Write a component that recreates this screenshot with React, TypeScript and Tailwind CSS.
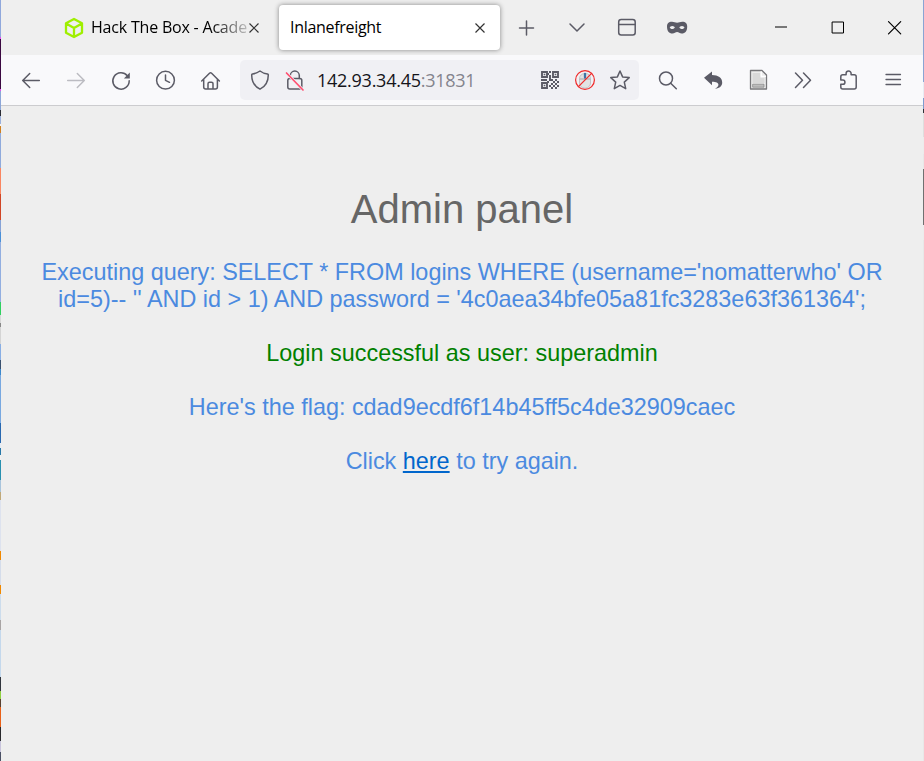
import React from "react";

type IconProps = { children: React.ReactNode; className?: string };

function Icon({ children, className = "" }: IconProps) {
  return (
    <svg
      viewBox="0 0 24 24"
      fill="none"
      stroke="currentColor"
      strokeWidth="1.5"
      strokeLinecap="round"
      strokeLinejoin="round"
      className={`h-6 w-6 shrink-0 ${className}`}
    >
      {children}
    </svg>
  );
}

const leftEdge: [number, string][] = [
  [37, "#90a8dc"], [2, "#e050f0"], [50, "#3a0840"], [2, "#e050f0"], [19, "#8ca6d8"], [6, "#2a2c34"],
  [8, "#9ab0dc"], [2, "#f4f4f4"], [7, "#d08020"], [35, "#8faadc"], [26, "#f98560"], [26, "#d04525"],
  [12, "#86a2d6"], [10, "#4a90d8"], [60, "#92aee0"], [13, "#30d060"], [8, "#d8d8d8"], [4, "#888888"],
  [17, "#d4d4d4"], [16, "#88aee4"], [9, "#39506f"], [6, "#3c88cc"], [48, "#78a8e0"], [20, "#2868b0"],
  [5, "#e4ebf4"], [7, "#2878a8"], [5, "#f0f0f0"], [20, "#2890b0"], [12, "#a8c4dc"], [8, "#c0a878"],
  [51, "#dde2ee"], [9, "#f08800"], [25, "#d4dcea"], [9, "#f08800"], [26, "#ccdcec"], [10, "#a8a4a4"],
  [47, "#c4d8ec"], [14, "#30343c"], [8, "#90d040"], [8, "#584030"], [20, "#e86018"], [14, "#28282c"],
  [11, "#c8c4dc"], [15, "#4a5064"],
];

const rightEdge: [number, string][] = [
  [82, "#8aa4d4"], [16, "#e8ecf4"], [11, "#7e9cd0"], [4, "#303238"], [24, "#dedede"], [17, "#ececec"],
  [15, "#e8e8e8"], [56, "#707070"], [15, "#ececec"], [521, "#e8e8e8"],
];

function Edge({ bands }: { bands: [number, string][] }) {
  return (
    <div className="flex w-px shrink-0 flex-col overflow-hidden">
      {bands.map(([height, background], i) => (
        <div key={i} className="w-px shrink-0" style={{ height, background }} />
      ))}
    </div>
  );
}

function TabClose() {
  return (
    <svg viewBox="0 0 12 12" className="h-3 w-3 shrink-0" fill="none" stroke="#333" strokeWidth="1.2">
      <path d="m1.500 1.500 9 9m0-9-9 9" />
    </svg>
  );
}

function TabStrip() {
  return (
    <div className="flex h-[55px] items-center bg-[#efefef] text-[#5b5b66]">
      <div className="flex h-[45px] w-[278px] shrink-0 items-center pl-[62px]">
        <svg viewBox="0 0 22 22" className="h-[22px] w-[22px] shrink-0" fill="none" stroke="#9fef00" strokeWidth="2.3" strokeLinejoin="round">
          <path d="M11 2 19 6.300v9.400L11 20 3 15.700V6.300zM3.500 6.700 11 11l7.500-4.300M11 11v8.500" />
        </svg>
        <span className="ml-[6px] w-[157px] shrink-0 whitespace-nowrap pb-px text-[16px] leading-6 tracking-[-0.2px] text-black [mask-image:linear-gradient(to_right,black_120px,transparent_165px)]">
          Hack The Box - Acade
        </span>
        <TabClose />
      </div>
      <div className="flex h-[45px] w-[221px] shrink-0 items-center justify-between rounded-[4px] bg-white pr-[14px] pl-[11px] shadow-[0_0_5px_rgba(0,0,0,0.45)]">
        <span className="pb-px text-[16px] leading-6 tracking-[-0.3px] text-black">Inlanefreight</span>
        <TabClose />
      </div>
      <div className="ml-[15px] flex shrink-0 gap-[26px]">
        <Icon><path d="M4.500 12h14M11.500 5v14" /></Icon>
        <Icon><path d="m5 8 7 7 7-7" /></Icon>
        <Icon>
          <rect x="3.700" y="3.500" width="16.500" height="15.500" rx="2.500" />
          <path d="M4 8.500h16" />
        </Icon>
        <Icon>
          <path
            fill="currentColor"
            stroke="none"
            fillRule="evenodd"
            d="M7 5.700C3.500 5.700 2 7.700 2 10.500 2 14.800 4 17.600 7.500 17.600c2 0 3-1.500 4.600-1.500s2.600 1.500 4.600 1.500c3.500 0 5.500-2.800 5.500-7.100C22.200 7.700 20.700 5.700 17.200 5.700c-2 0-3.400 1-5.100 1S9 5.700 7 5.700Zm.2 4.300c1.500 0 2.300.8 2.700 1.600-.5.900-1.400 1.500-2.700 1.500s-2.100-.6-2.500-1.500c.4-.8 1.200-1.600 2.500-1.600Zm9.800 0c1.300 0 2.100.8 2.500 1.600-.4.900-1.200 1.500-2.500 1.500s-2.200-.6-2.700-1.500c.4-.8 1.200-1.600 2.700-1.600Z"
          />
        </Icon>
      </div>
      <div className="ml-auto flex shrink-0 items-center gap-[33px] pr-4 text-black">
        <Icon><path strokeWidth="1" strokeLinecap="butt" d="M6 11h12" /></Icon>
        <Icon><path strokeWidth="1" strokeLinejoin="miter" d="M6.500 6h11v11h-11z" /></Icon>
        <Icon><path strokeWidth="1.200" d="m5.500 5.700 12.200 12.200m0-12.200L5.500 17.900" /></Icon>
      </div>
    </div>
  );
}

const qrDots = [
  [11, 3], [9, 5], [11, 7], [3, 11], [7, 11], [11, 11], [9, 13], [13, 11], [15, 13], [17, 11], [19, 13],
  [13, 15], [11, 17], [15, 17], [17, 15], [19, 17], [13, 19], [17, 19], [11, 9], [5, 11],
];

function AddressBar() {
  return (
    <div className="flex h-10 w-[399px] shrink-0 items-center rounded-[5px] bg-[#f0f0f4] pr-[7px] pl-2">
      <Icon>
        <path d="M12 3c2.500 1.900 5 2.700 7.500 2.900a1 1 0 0 1 .8 1c0 6-2 11-8.300 14.300C5.700 17.900 3.700 12.900 3.700 6.900a1 1 0 0 1 .8-1C7 5.700 9.500 4.900 12 3Z" />
      </Icon>
      <Icon className="ml-[11px]">
        <path d="M7.300 10.500V7.600a4.500 4.500 0 0 1 9 0v2.900" />
        <rect x="4.800" y="10.500" width="14" height="10.500" rx="2" />
        <path d="m3.500 5 16.500 17" stroke="#f0f0f4" strokeWidth="3" />
        <path d="m3.500 5 16.500 17" stroke="#ff4f70" strokeWidth="1.700" />
      </Icon>
      <span className="ml-[10px] whitespace-nowrap text-[18px] leading-6 tracking-[-0.26px] text-[#15141a]">
        142.93.34.45<span className="text-[#84848d]">:31831</span>
      </span>
      <div className="ml-auto flex gap-[11px]">
        <Icon>
          <g strokeWidth="1.900" strokeLinejoin="miter">
            <path d="M4 4h5v5H4zM15 4h5v5h-5zM4 15h5v5H4z" />
          </g>
          <g fill="currentColor" stroke="none">
            <path d="M5.700 5.700h1.600v1.600H5.700zM16.700 5.700h1.600v1.600h-1.600zM5.700 16.700h1.600v1.600H5.700z" />
            {qrDots.map(([x, y]) => (
              <rect key={`${x}-${y}`} x={x} y={y} width="2" height="2" />
            ))}
          </g>
        </Icon>
        <Icon>
          <rect x="6.500" y="5.500" width="11" height="14.500" rx="5" fill="#e2e3e3" stroke="#c3c5c6" strokeWidth="1" />
          <path d="M7 11h10M12 5.500V11" stroke="#9fa5aa" strokeWidth="1" />
          <path d="M12 6v3.500" stroke="#3e72a5" strokeWidth="2.300" />
          <circle cx="12" cy="12" r="9.400" stroke="#ef2929" strokeWidth="1.200" />
          <path d="M18.600 5.400 5.400 18.600" stroke="#ef2929" strokeWidth="1.300" />
        </Icon>
        <Icon>
          <path d="m12 3 2.600 5.900 6.600.7-4.900 4.500 1.400 6.600L12 17.400l-5.700 3.300 1.400-6.600-4.900-4.500 6.600-.7z" />
        </Icon>
      </div>
    </div>
  );
}

function Toolbar() {
  return (
    <div className="flex h-[51px] items-center border-b border-[#cccccf] bg-[#f9f9fb] text-[#5b5b66]">
      <div className="flex w-[239px] shrink-0 gap-[21px] pl-[18px]">
        <Icon><path d="M20.300 12.500H3.700M10.700 5.500l-7 7 7 7" /></Icon>
        <Icon className="text-[#bcbcc2]"><path d="M3.700 12.500h16.600M13.300 5.500l7 7-7 7" /></Icon>
        <Icon>
          <path d="M18.300 7.700a8.200 8.200 0 1 0 1.900 5.100" />
          <path d="M20.800 4.500v5.900h-5.900z" fill="currentColor" stroke="none" />
        </Icon>
        <Icon>
          <circle cx="11.500" cy="12.200" r="8.900" />
          <path d="M11.500 7v5.300l4 2" />
        </Icon>
        <Icon>
          <path d="m2.700 13 7.800-7.800a1.500 1.500 0 0 1 2.100 0l7.800 7.800M4.700 11.500v7.500a2 2 0 0 0 2 2h9.700a2 2 0 0 0 2-2v-7.500M9 20.700v-5a1.500 1.500 0 0 1 1.500-1.500h2a1.500 1.500 0 0 1 1.500 1.500v5" />
        </Icon>
      </div>
      <AddressBar />
      <div className="ml-[17px] flex shrink-0 gap-[21px]">
        <Icon>
          <circle cx="10" cy="10.500" r="6.500" />
          <path d="m14.700 15.200 5.600 5.600" />
        </Icon>
        <Icon>
          <path fill="currentColor" stroke="none" d="M3 9.800 11 3.500v3.600c6.200 0 10.200 2.900 10.200 7.300 0 3.300-2.300 5.800-7.200 6.400 2.400-1.200 3.400-2.500 3.400-4 0-1.800-2-3-6.400-3v3.500z" />
        </Icon>
        <Icon>
          <path d="M4.500 2.500h11.500l4.500 4.500v14h-16z" fill="#ececec" stroke="#77777a" strokeWidth="1.300" />
          <path d="M6.500 5h8v5h4v5h-12z" fill="#d9d9d9" stroke="none" />
          <path d="M15.200 3.800v4.500h4.300" stroke="#fff" strokeWidth="1.300" />
          <path d="M7 16.200h11v3H7z" fill="#bdbdbd" stroke="#8a8a8a" strokeWidth="0.8" />
        </Icon>
        <Icon><path d="m4.500 5 7 7.200-7 7.300M12.500 5l7 7.200-7 7.300" /></Icon>
        <Icon>
          <path d="M4.800 12V8.700a2 2 0 0 1 2-2h3.300V5.500a2.500 2.500 0 0 1 5 0v1.200h3.100a2 2 0 0 1 2 2V19a2 2 0 0 1-2 2H6.800a2 2 0 0 1-2-2v-2.700h2a2.150 2.150 0 0 0 0-4.300z" />
        </Icon>
        <Icon><path d="M5 6.500h14.500M5 11.500h14.500M5 16.500h14.500" strokeWidth="1.300" /></Icon>
      </div>
    </div>
  );
}

export default function App() {
  return (
    <div className="flex h-[761px] w-[924px] overflow-hidden bg-[#eeeeee] font-['Open_Sans','Noto_Sans',sans-serif]">
      <Edge bands={leftEdge} />
      <div className="flex w-[922px] shrink-0 flex-col">
        <TabStrip />
        <Toolbar />
        <main className="flex-1 px-8 pt-[80px] text-center font-['Liberation_Sans',Arial,sans-serif] text-[23.4px] leading-[27px] text-[#4b8ae0]">
          <h1 className="text-[40px] leading-[46px] text-[#666666]">Admin panel</h1>
          <p className="mt-[27px] whitespace-nowrap">
            Executing query: SELECT * FROM logins WHERE (username='nomatterwho' OR
            <br />
            id=5)-- '' AND id &gt; 1) AND password = '4c0aea34bfe05a81fc3283e63f361364';
          </p>
          <p className="mt-[27px] text-[#008000]">Login successful as user: superadmin</p>
          <p className="mt-[27px]">Here's the flag: cdad9ecdf6f14b45ff5c4de32909caec</p>
          <p className="mt-[27px]">
            Click <a href="#" className="text-[#0066cc] underline decoration-2 underline-offset-2">here</a> to try again.
          </p>
        </main>
      </div>
      <Edge bands={rightEdge} />
    </div>
  );
}
